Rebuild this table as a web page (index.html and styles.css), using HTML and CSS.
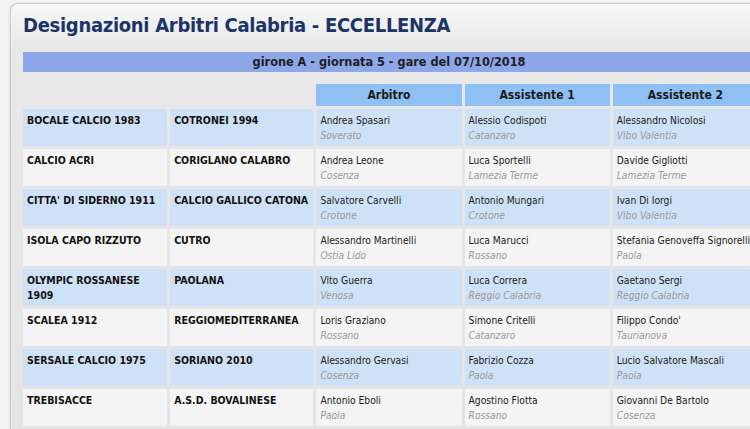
FILE: index.html
```html
<!DOCTYPE html>
<html lang="it">
<head>
<meta charset="utf-8">
<title>Designazioni Arbitri Calabria - ECCELLENZA</title>
<link rel="stylesheet" href="styles.css">
</head>
<body>
<div class="page">
  <div class="panel">
    <h1 class="title">Designazioni Arbitri Calabria - ECCELLENZA</h1>
    <div class="bar">girone A - giornata 5 - gare del 07/10/2018</div>
    <table class="grid">
      <colgroup>
        <col class="c-club"><col class="c-club2"><col class="c-ref"><col class="c-ref"><col class="c-ref">
      </colgroup>
      <thead>
        <tr><th class="blank"></th><th class="blank"></th><th>Arbitro</th><th>Assistente 1</th><th>Assistente 2</th></tr>
      </thead>
      <tbody>
        <tr class="alt">
          <td class="club">BOCALE CALCIO 1983</td><td class="club">COTRONEI 1994</td>
          <td><span class="name">Andrea Spasari</span><span class="city">Soverato</span></td>
          <td><span class="name">Alessio Codispoti</span><span class="city">Catanzaro</span></td>
          <td><span class="name">Alessandro Nicolosi</span><span class="city">Vibo Valentia</span></td>
        </tr>
        <tr>
          <td class="club">CALCIO ACRI</td><td class="club">CORIGLANO CALABRO</td>
          <td><span class="name">Andrea Leone</span><span class="city">Cosenza</span></td>
          <td><span class="name">Luca Sportelli</span><span class="city">Lamezia Terme</span></td>
          <td><span class="name">Davide Gigliotti</span><span class="city">Lamezia Terme</span></td>
        </tr>
        <tr class="alt">
          <td class="club">CITTA' DI SIDERNO 1911</td><td class="club">CALCIO GALLICO CATONA</td>
          <td><span class="name">Salvatore Carvelli</span><span class="city">Crotone</span></td>
          <td><span class="name">Antonio Mungari</span><span class="city">Crotone</span></td>
          <td><span class="name">Ivan Di Iorgi</span><span class="city">Vibo Valentia</span></td>
        </tr>
        <tr>
          <td class="club">ISOLA CAPO RIZZUTO</td><td class="club">CUTRO</td>
          <td><span class="name">Alessandro Martinelli</span><span class="city">Ostia Lido</span></td>
          <td><span class="name">Luca Marucci</span><span class="city">Rossano</span></td>
          <td><span class="name">Stefania Genoveffa Signorelli</span><span class="city">Paola</span></td>
        </tr>
        <tr class="alt">
          <td class="club">OLYMPIC ROSSANESE 1909</td><td class="club">PAOLANA</td>
          <td><span class="name">Vito Guerra</span><span class="city">Venosa</span></td>
          <td><span class="name">Luca Correra</span><span class="city">Reggio Calabria</span></td>
          <td><span class="name">Gaetano Sergi</span><span class="city">Reggio Calabria</span></td>
        </tr>
        <tr>
          <td class="club">SCALEA 1912</td><td class="club">REGGIOMEDITERRANEA</td>
          <td><span class="name">Loris Graziano</span><span class="city">Rossano</span></td>
          <td><span class="name">Simone Critelli</span><span class="city">Catanzaro</span></td>
          <td><span class="name">Filippo Condo'</span><span class="city">Taurianova</span></td>
        </tr>
        <tr class="alt">
          <td class="club">SERSALE CALCIO 1975</td><td class="club">SORIANO 2010</td>
          <td><span class="name">Alessandro Gervasi</span><span class="city">Cosenza</span></td>
          <td><span class="name">Fabrizio Cozza</span><span class="city">Paola</span></td>
          <td><span class="name">Lucio Salvatore Mascali</span><span class="city">Paola</span></td>
        </tr>
        <tr>
          <td class="club">TREBISACCE</td><td class="club">A.S.D. BOVALINESE</td>
          <td><span class="name">Antonio Eboli</span><span class="city">Paola</span></td>
          <td><span class="name">Agostino Flotta</span><span class="city">Rossano</span></td>
          <td><span class="name">Giovanni De Bartolo</span><span class="city">Cosenza</span></td>
        </tr>
      </tbody>
    </table>
  </div>
</div>
</body>
</html>
```
FILE: styles.css
```css
html, body {
  margin: 0;
  padding: 0;
  background: #f3f3f3;
  overflow: hidden;
}
body {
  font-family: "DejaVu Sans Condensed", "DejaVu Sans", sans-serif;
  color: #1a1a1a;
}
.page {
  width: 800px;
  padding: 3px 0 0 10px;
}
.panel {
  width: 780px;
  border: 1px solid #cdcdcd;
  border-right: none;
  border-radius: 8px 0 0 0;
  background: linear-gradient(to bottom, #f7f7f7 0px, #e8e8e8 45px, #e4e4e4 100%);
  padding: 9px 0 4px 12px;
  box-shadow: -1px 0 2px rgba(0,0,0,0.08);
}
.title {
  margin: 0;
  font-size: 20px;
  letter-spacing: -0.3px;
  line-height: 24px;
  font-weight: bold;
  color: #1b3569;
}
.bar {
  margin-top: 15px;
  width: 732px;
  height: 20px;
  line-height: 20px;
  background: #8ea7e8;
  text-align: center;
  font-size: 12.6px;
  font-weight: bold;
  color: #1e1e1e;
}
.grid {
  border-collapse: separate;
  border-spacing: 3px;
  margin: 9px 0 0 -3px;
  table-layout: fixed;
  width: 741px;
}
.c-club { width: 144px; }
.c-club2 { width: 143px; }
.c-ref { width: 145px; }
.grid th {
  height: 22px;
  padding: 0;
  background: #8fc0f3;
  font-size: 12px;
  font-weight: bold;
  color: #1a1a1a;
  text-align: center;
  vertical-align: middle;
}
.grid th.blank {
  background: transparent;
}
.grid td {
  height: 37px;
  box-sizing: border-box;
  padding: 4px 4px 0 4px;
  vertical-align: top;
  background: #f4f4f4;
  font-size: 10.2px;
  line-height: 15px;
  white-space: normal;
}
.grid tr.alt td {
  background: #cfe1f7;
}
.grid td.club {
  font-weight: bold;
  font-size: 10.5px;
  color: #111;
}
.name {
  display: block;
  color: #1a1a1a;
  white-space: nowrap;
}
.city {
  display: block;
  font-style: italic;
  color: #9a9a9a;
  white-space: nowrap;
}
```
